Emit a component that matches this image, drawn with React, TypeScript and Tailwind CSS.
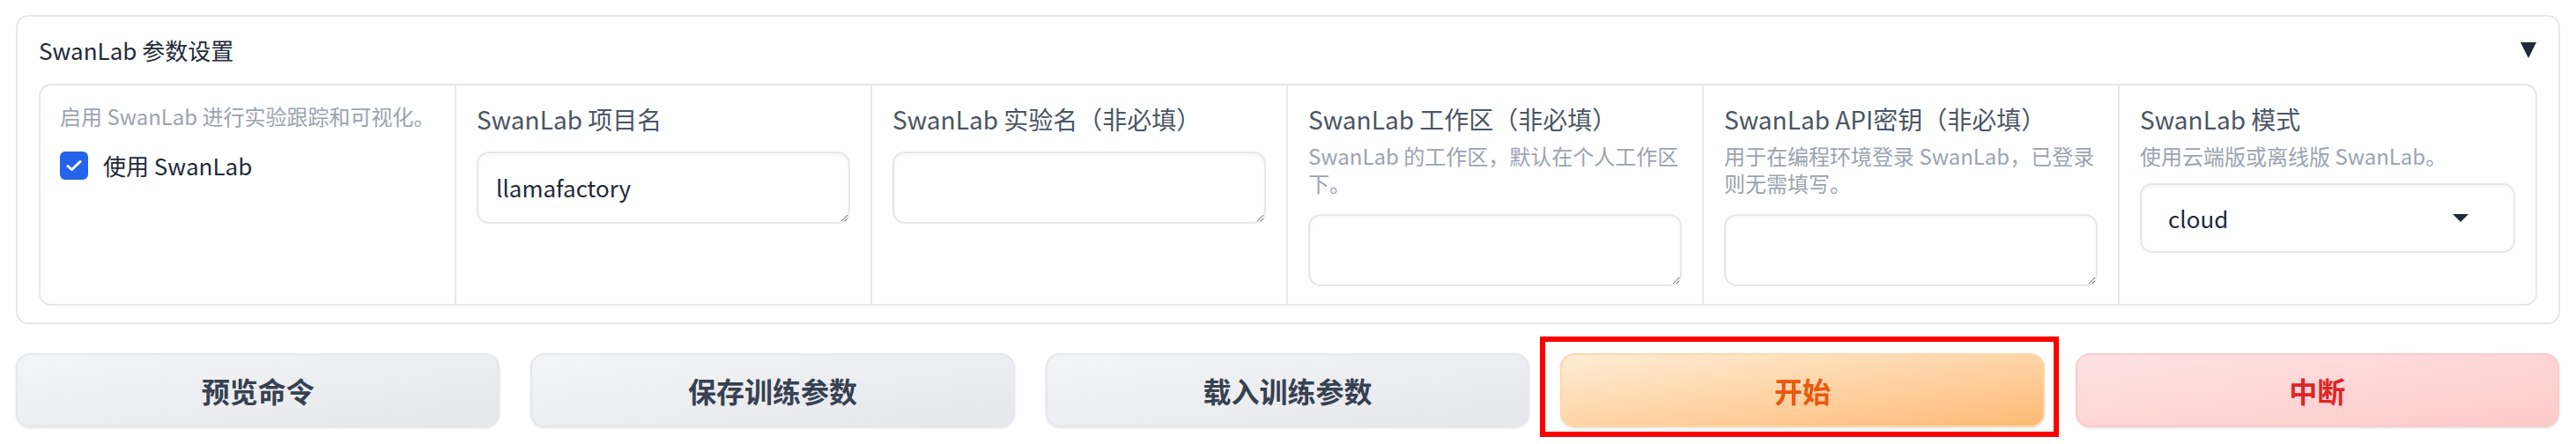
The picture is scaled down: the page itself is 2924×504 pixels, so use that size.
import React from "react";

const FONT = "font-['Noto_Sans_CJK_SC','Noto_Sans',sans-serif]";

function Label({ children }: { children: React.ReactNode }) {
  return <div className="text-[28px] leading-[40px] text-[#4b5563]">{children}</div>;
}

function Info({ children }: { children: React.ReactNode }) {
  return <div className="text-[24px] leading-[31px] text-[#9ca3af]">{children}</div>;
}

function TextBox({ value = "" }: { value?: string }) {
  return (
    <textarea
      readOnly
      defaultValue={value}
      rows={1}
      className="block h-[82px] w-full resize-y rounded-[14px] border-2 border-[#e5e7eb] bg-white px-[20px] py-[19px] text-[26px] leading-[40px] text-[#1f2937] shadow-[inset_0_2px_4px_rgba(0,0,0,0.04)] outline-none"
    />
  );
}

function Triangle({ w, h }: { w: number; h: number }) {
  return (
    <svg width={w} height={h} viewBox={`0 0 ${w} ${h}`} aria-hidden>
      <polygon points={`0,0 ${w},0 ${w / 2},${h}`} fill="#1f2937" />
    </svg>
  );
}

export default function App() {
  const buttons = [
    { text: "预览命令", cls: "border-[#e5e7eb] bg-gradient-to-br from-[#f3f4f6] to-[#e5e7eb] text-[#374151]" },
    { text: "保存训练参数", cls: "border-[#e5e7eb] bg-gradient-to-br from-[#f3f4f6] to-[#e5e7eb] text-[#374151]" },
    { text: "载入训练参数", cls: "border-[#e5e7eb] bg-gradient-to-br from-[#f3f4f6] to-[#e5e7eb] text-[#374151]" },
    { text: "开始", cls: "border-[#fed7aa] bg-gradient-to-br from-[#ffedd5] to-[#fdba74] text-[#ea580c]", marked: true },
    { text: "中断", cls: "border-[#fecaca] bg-gradient-to-br from-[#fee2e2] to-[#fecaca] text-[#dc2626]" },
  ];

  return (
    <div className={`${FONT} min-h-[504px] bg-white px-[18px] pt-[17px]`}>
      {/* accordion */}
      <div className="rounded-[14px] border-2 border-[#e5e7eb] px-[24px] pb-[19px] pt-[18px]">
        <div className="flex h-[40px] items-center justify-between">
          <span className="text-[26px] leading-[40px] text-[#1f2937]">SwanLab 参数设置</span>
          <span className="pr-[1px]">
            <Triangle w={18} h={18} />
          </span>
        </div>

        <div className="mt-[18px] grid h-[252px] grid-cols-6 divide-x-2 divide-[#e5e7eb] rounded-[14px] border-2 border-[#e5e7eb]">
          <div className="px-[22px] pt-[19px]">
            <Info>启用 SwanLab 进行实验跟踪和可视化。</Info>
            <label className="mt-[21px] flex items-center gap-[17px]">
              <span className="flex h-[32px] w-[32px] items-center justify-center rounded-[6px] bg-[#2563eb]">
                <svg width="18" height="14" viewBox="0 0 18 14" aria-hidden>
                  <path d="M2 7.5 L6.5 11.5 L16 2.5" fill="none" stroke="#fff" strokeWidth="3" strokeLinecap="round" strokeLinejoin="round" />
                </svg>
              </span>
              <span className="text-[26px] leading-[40px] text-[#1f2937]">使用 SwanLab</span>
            </label>
          </div>

          <div className="px-[23px] pt-[18px]">
            <Label>SwanLab 项目名</Label>
            <div className="mt-[17px]">
              <TextBox value="llamafactory" />
            </div>
          </div>

          <div className="px-[23px] pt-[18px]">
            <Label>SwanLab 实验名（非必填）</Label>
            <div className="mt-[17px]">
              <TextBox />
            </div>
          </div>

          <div className="px-[23px] pt-[18px]">
            <Label>SwanLab 工作区（非必填）</Label>
            <div className="mt-[6px]">
              <Info>SwanLab 的工作区，默认在个人工作区下。</Info>
            </div>
            <div className="mt-[20px]">
              <TextBox />
            </div>
          </div>

          <div className="px-[23px] pt-[18px]">
            <Label>SwanLab API密钥（非必填）</Label>
            <div className="mt-[6px]">
              <Info>用于在编程环境登录 SwanLab，已登录则无需填写。</Info>
            </div>
            <div className="mt-[20px]">
              <TextBox />
            </div>
          </div>

          <div className="px-[23px] pt-[18px]">
            <Label>SwanLab 模式</Label>
            <div className="mt-[6px]">
              <Info>使用云端版或离线版 SwanLab。</Info>
            </div>
            <div className="mt-[16px] flex h-[79px] items-center justify-between rounded-[14px] border-2 border-[#e5e7eb] bg-white pl-[30px] pr-[51px] shadow-[inset_0_2px_4px_rgba(0,0,0,0.04)]">
              <span className="text-[26px] leading-[40px] text-[#1f2937]">cloud</span>
              <Triangle w={18} h={9} />
            </div>
          </div>
        </div>
      </div>

      {/* action buttons */}
      <div className="mt-[33px] grid grid-cols-5 gap-[35px] pr-[1px]">
        {buttons.map((b) => (
          <div key={b.text} className="relative">
            <button
              type="button"
              className={`flex h-[84px] w-full items-center justify-center rounded-[16px] border-2 text-[32px] font-bold shadow-sm ${b.cls}`}
            >
              {b.text}
            </button>
            {b.marked && (
              <div className="pointer-events-none absolute -bottom-[11px] -left-[23px] -right-[16px] -top-[19px] border-[6px] border-[#ff0000]" />
            )}
          </div>
        ))}
      </div>
    </div>
  );
}
